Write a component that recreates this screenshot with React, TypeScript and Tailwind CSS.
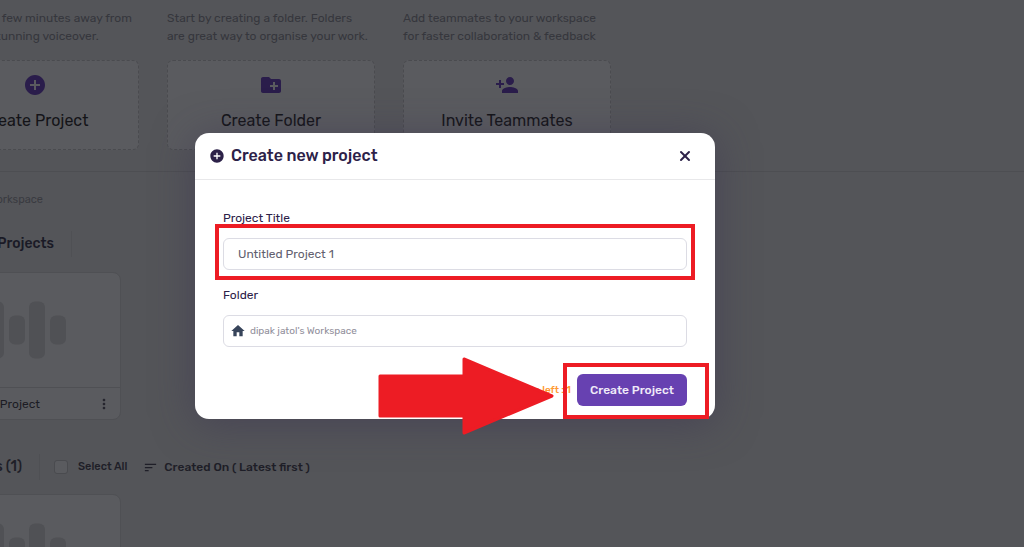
import React, { useState } from 'react';
import { X } from 'lucide-react';
import { MdAddCircle, MdCreateNewFolder, MdPersonAddAlt1, MdMoreVert, MdSort, MdHome } from 'react-icons/md';

interface ActionCardProps {
  hint: string[];
  label: string;
  icon: React.ReactNode;
}

const ActionCard: React.FC<ActionCardProps> = ({ hint, label, icon }) => (
  <div className="w-[208px]">
    <p className="mb-[15px] h-9 whitespace-nowrap text-xs leading-[18px] text-[#36373d]">
      {hint.map(line => (
        <span key={line} className="block">{line}</span>
      ))}
    </p>
    <button className="flex h-[90px] w-full flex-col items-center rounded-md border border-dashed border-[#4a4b4f] bg-[#5a5b5f] pt-3">
      <span className="flex h-6 items-center text-[#2a1d4b]">{icon}</span>
      <span className="mt-3 text-base leading-6 text-[#141418]">{label}</span>
    </button>
  </div>
);

const bars = [
  { x: 0, tall: false },
  { x: 20, tall: true },
  { x: 41, tall: false },
  { x: 61, tall: true },
  { x: 82, tall: false },
];

const ProjectCard: React.FC = () => (
  <div className="w-[208px] rounded-lg border border-[#4f5054] bg-[#5a5b5f]">
    <div className="flex h-[114px] items-center justify-center">
      <svg width="98" height="58" viewBox="0 0 98 58" fill="#505155">
        {bars.map(bar => (
          <rect key={bar.x} x={bar.x} y={bar.tall ? 0.5 : 14.5} width="16" height={bar.tall ? 57 : 29} rx="6" />
        ))}
      </svg>
    </div>
    <div className="flex h-8 items-center justify-between border-t border-[#4f5054] px-2">
      <span className="w-[118px] text-right text-xs text-[#1c1c24]">Untitled Project</span>
      <button aria-label="More options" className="text-[#25252d]">
        <MdMoreVert size={16} />
      </button>
    </div>
  </div>
);

export default function App() {
  const [title, setTitle] = useState('Untitled Project 1');

  return (
    <div className="relative h-screen overflow-hidden bg-[#545559] font-['Rubik','Roboto',sans-serif]">
      <main className="-ml-[87px]">
        <section className="flex gap-7 border-b border-[#4d4e52] pb-[21px] pl-[18px] pt-[9px]">
          <ActionCard
            hint={["You're just a few minutes away from", 'creating a stunning voiceover.']}
            label="Create Project"
            icon={<MdAddCircle size={24} />}
          />
          <ActionCard
            hint={['Start by creating a folder. Folders', 'are great way to organise your work.']}
            label="Create Folder"
            icon={<MdCreateNewFolder size={24} />}
          />
          <ActionCard
            hint={['Add teammates to your workspace', 'for faster collaboration & feedback']}
            label="Invite Teammates"
            icon={<MdPersonAddAlt1 size={24} className="-scale-x-100" />}
          />
        </section>

        <section>
          <p className="mt-5 w-[130px] text-right text-[11px] leading-4 text-[#3a3b41]">Workspace</p>
          <div className="mt-[23px] flex h-[26px] items-center">
            <h2 className="w-[141px] text-right text-sm font-medium text-[#1a1a26]">Recent Projects</h2>
            <span className="ml-[17px] h-full w-px bg-[#4f5054]" />
          </div>
          <div className="mt-[15px]">
            <ProjectCard />
          </div>
          <div className="mt-[34px] flex h-[26px] items-center text-[#1f1f28]">
            <h2 className="w-[109px] text-right text-sm font-medium">Projects (1)</h2>
            <span className="ml-[17px] h-full w-px bg-[#4f5054]" />
            <label className="ml-3.5 flex items-center gap-2.5 text-[11px] font-medium">
              <input type="checkbox" className="size-3.5 appearance-none rounded-[3px] border border-[#4a4b4f] bg-[#5a5b5f]" />
              Select All
            </label>
            <button className="ml-4 flex items-center gap-1.5 text-xs font-medium">
              <MdSort size={15} />
              Created On ( Latest first )
            </button>
          </div>
          <div className="mt-3.5">
            <ProjectCard />
          </div>
        </section>
      </main>

      <div className="absolute inset-y-0 -left-[114px] right-0 flex items-start justify-center pt-[133px]">
        <div
          role="dialog"
          aria-labelledby="dialog-title"
          className="relative w-[520px] rounded-[14px] bg-white text-[#2c2148] shadow-[0_4px_40px_#3a315080]"
        >
          <div className="flex h-[47px] items-center gap-1.5 border-b border-[#e8e8ea] pl-3.5 pr-[22px]">
            <MdAddCircle size={16} />
            <h1 id="dialog-title" className="flex-1 text-base font-medium">Create new project</h1>
            <button aria-label="Close">
              <X size={16} strokeWidth={3} />
            </button>
          </div>

          <div className="px-7 pb-[13px] pt-7">
            <label htmlFor="project-title" className="mb-2.5 block text-xs leading-5">Project Title</label>
            <input
              id="project-title"
              value={title}
              onChange={e => setTitle(e.target.value)}
              className="block h-8 w-full rounded-md border border-[#dcdce4] px-3.5 text-xs text-[#62606e] outline-none"
            />
            <label htmlFor="folder" className="mb-2.5 mt-[15px] block text-xs leading-5">Folder</label>
            <button
              id="folder"
              className="flex h-8 w-full items-center gap-1 rounded-md border border-[#dcdce4] px-1.5 text-[10px] text-[#92909c]"
            >
              <MdHome size={16} className="text-[#37445a]" />
              dipak jatol's Workspace
            </button>
            <div className="mt-[27px] flex items-center justify-end gap-1.5">
              <span className="text-[10px] font-medium text-[#ff9a32]">Projects left : 1</span>
              <button className="h-8 w-[110px] rounded-md bg-[#6741b1] text-xs font-medium text-[#efeaf8]">
                Create Project
              </button>
            </div>
          </div>

          {/* tutorial highlights */}
          <div className="pointer-events-none absolute left-5 top-[91px] h-14 w-[480px] border-4 border-[#ed1c24]" />
          <div className="pointer-events-none absolute left-[368px] top-[230px] h-14 w-[146px] border-4 border-[#ed1c24]" />
          <svg className="pointer-events-none absolute left-[183px] top-[223px]" width="176" height="80" viewBox="0 0 176 80">
            <path
              d="M2 20H86V3L174 40L86 77V60H2Z"
              fill="#ed1c24"
              stroke="#ed1c24"
              strokeWidth="3"
              strokeLinejoin="round"
            />
          </svg>
        </div>
      </div>
    </div>
  );
}
